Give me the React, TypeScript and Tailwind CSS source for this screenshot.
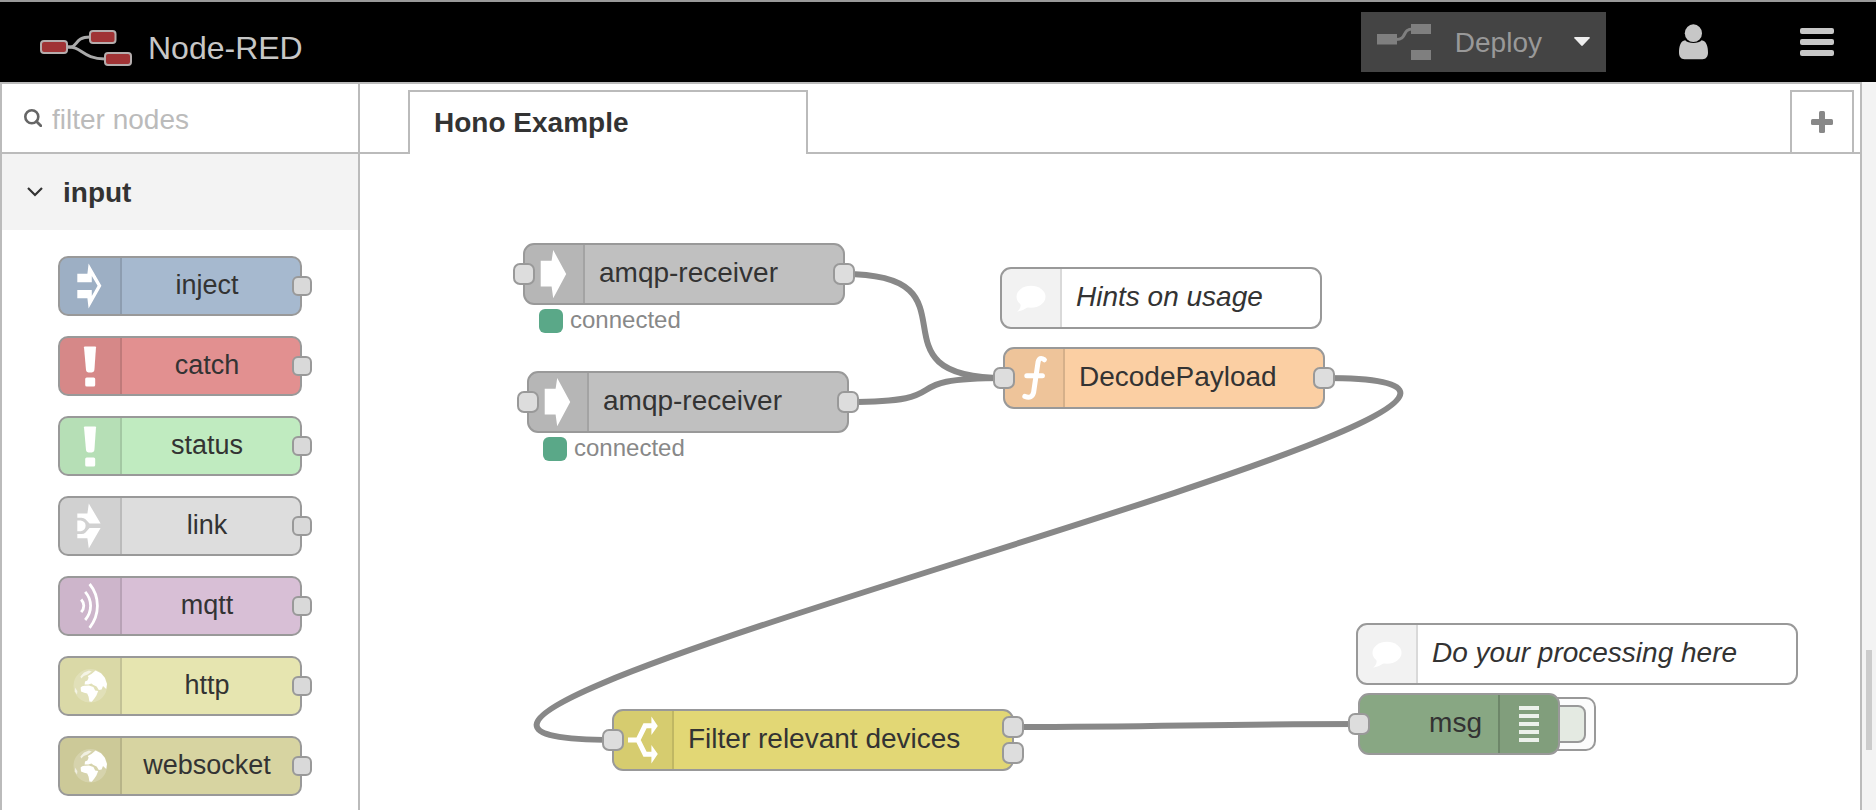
import type { ReactNode } from "react";

const NODE_WIDTH = 200;

function wirePath(x1: number, y1: number, x2: number, y2: number) {
  const dx = x2 - x1;
  const delta = Math.hypot(dx, y2 - y1);
  let scale = 0.75;
  if (delta < NODE_WIDTH) {
    scale = 0.75 - 0.75 * ((NODE_WIDTH - delta) / NODE_WIDTH);
  }
  if (dx < 0) {
    scale += 2 * (Math.min(5 * NODE_WIDTH, Math.abs(dx)) / (5 * NODE_WIDTH));
  }
  const reach = scale * NODE_WIDTH;
  return `M${x1} ${y1} C${x1 + reach} ${y1} ${x2 - reach} ${y2} ${x2} ${y2}`;
}

function Glyph({ children }: { children: ReactNode }) {
  return (
    <svg viewBox="0 0 60 56" width="60" height="56" className="shrink-0" fill="white" aria-hidden="true">
      {children}
    </svg>
  );
}

const InjectIcon = () => (
  <Glyph>
    <path
      fillRule="evenodd"
      d="M17.3 15.8H27.4L28.6 5.5L41.4 27.8L28.6 50.5L27.4 40.3H17.3V32H31.8V38L37.6 27.8L31.8 18V24.2H17.3Z"
    />
  </Glyph>
);

const AlertIcon = () => (
  <Glyph>
    <path d="M24 9.2Q24 8.4 24.8 8.4H35.2Q36 8.4 36 9.2L34.4 32Q34 34.6 30 34.6Q26.400 34.600 26 32Z" />
    <rect x="25.200" y="39.400" width="10" height="9.200" rx="1.500" />
  </Glyph>
);

const LinkIcon = () => (
  <Glyph>
    <path d="M17.3 15.5H27.400L28.800 5.500L40.600 25.600H29.500L25.500 21.200Q24 19.700 21.500 19.700H17.300Z" />
    <path d="M17.300 40.300H27.400L28.800 50.500L40.600 30H29.500L25.500 34.500Q24 36 21.500 36H17.300Z" />
    <path d="M17.300 22.500H20.800Q25.600 23.400 25.600 27.800Q25.600 32.200 20.800 33.200H17.300Z" />
  </Glyph>
);

const WavesIcon = () => (
  <Glyph>
    <g fill="none" stroke="white" strokeWidth="2.800">
      <path d="M29.600 6Q37.400 15.500 37.400 27.800Q37.400 40 29.600 49.800" />
      <path d="M25.200 13.800Q30.600 20 30.600 27.800Q30.600 35.600 25.200 42" />
      <path d="M21.200 21.500Q23.800 24.400 23.800 27.800Q23.800 31.200 21.200 34.200" />
    </g>
  </Glyph>
);

const GlobeIcon = () => (
  <Glyph>
    <circle cx="30.300" cy="27.800" r="16.800" fillOpacity="0.2" />
    <path d="M20.600 29.400Q22 27.600 25 27.800L29 27.400L33.400 29L35.200 32.400L38.200 33L36.400 37.400L34.400 40.400L31.800 43.800L29.400 43.400L28.600 38.800L27.200 35.600L24.200 34.800L21 33.600Z" />
    <path d="M24.600 26.400L25 23.600L27.400 22.600L28.600 19.800L27.800 18L31.400 16L35.600 12.600L41 15.200L44.800 19.800L47 26L46.200 31L43 28L41.600 31.400L38.800 32L36.600 28.600L33.400 27L31.400 25.400L28.400 26.400Z" />
    <path d="M20.400 18.600L24 14.400L29 12.400L31.800 13.400L27.600 16.400L23.800 18L21.200 20.600Z" fillOpacity="0.650" />
    <path d="M15 29.500L17.400 33L17 36.400L14.800 33.400Z" fillOpacity="0.600" />
  </Glyph>
);

const ArrowIcon = () => (
  <Glyph>
    <path d="M15.700 14.800H26.600L28.200 4L41.200 28L28.200 52.200L26.600 40.600H15.700Z" />
  </Glyph>
);

const CommentIcon = () => (
  <Glyph>
    <ellipse cx="29" cy="26.800" rx="14.500" ry="11" />
    <path d="M18.500 34Q19.500 37.500 15.200 41.800Q21.500 40.500 27 36.500Z" />
  </Glyph>
);

const FunctionIcon = () => (
  <Glyph>
    <g fill="none" stroke="white" strokeWidth="5" strokeLinecap="round">
      <path d="M39.400 9.800Q34.400 6 33 12.400L28.600 42.400Q27 49 19.800 46.400" />
      <path d="M21.800 25.800H37.400" />
    </g>
  </Glyph>
);

const SwitchIcon = () => (
  <Glyph>
    <path d="M14 28H25M24 28L31 13.800H38M24 28L31 42.200H38" fill="none" stroke="white" strokeWidth="5" />
    <path d="M37.400 4.400L43.800 14L37.400 23ZM37.400 33L43.800 42L37.400 51.600Z" />
  </Glyph>
);

const DebugIcon = () => (
  <Glyph>
    {[10, 18, 26, 34, 42].map((y) => (
      <rect key={y} x="19" y={y} width="20" height="4" fillOpacity="0.850" />
    ))}
  </Glyph>
);

const PALETTE = [
  { label: "inject", color: "bg-[#a6b9cf]", Icon: InjectIcon },
  { label: "catch", color: "bg-[#e29090]", Icon: AlertIcon },
  { label: "status", color: "bg-[#c0ebc0]", Icon: AlertIcon },
  { label: "link", color: "bg-[#dddddd]", Icon: LinkIcon },
  { label: "mqtt", color: "bg-[#d8bfd6]", Icon: WavesIcon },
  { label: "http", color: "bg-[#e6e5b0]", Icon: GlobeIcon },
  { label: "websocket", color: "bg-[#d7d4a1]", Icon: GlobeIcon },
];

type FlowNodeData = {
  id: string;
  label: string;
  x: number;
  y: number;
  width: number;
  color: string;
  Icon: () => ReactNode;
  inputs?: boolean;
  outputs?: number;
  comment?: boolean;
  debug?: boolean;
  status?: string;
};

/* Positions are relative to the workspace canvas. */
const NODES: FlowNodeData[] = [
  { id: "amqp1", label: "amqp-receiver", x: 163, y: 89, width: 322, color: "bg-[#c0c0c0]", Icon: ArrowIcon, inputs: true, outputs: 1, status: "connected" },
  { id: "amqp2", label: "amqp-receiver", x: 167, y: 217, width: 322, color: "bg-[#c0c0c0]", Icon: ArrowIcon, inputs: true, outputs: 1, status: "connected" },
  { id: "hints", label: "Hints on usage", x: 640, y: 113, width: 322, color: "bg-white", Icon: CommentIcon, comment: true },
  { id: "decode", label: "DecodePayload", x: 643, y: 193, width: 322, color: "bg-[#fbcfa3]", Icon: FunctionIcon, inputs: true, outputs: 1 },
  { id: "filter", label: "Filter relevant devices", x: 252, y: 555, width: 402, color: "bg-[#e2d775]", Icon: SwitchIcon, inputs: true, outputs: 2 },
  { id: "process", label: "Do your processing here", x: 996, y: 469, width: 442, color: "bg-white", Icon: CommentIcon, comment: true },
  { id: "debug", label: "msg", x: 998, y: 539, width: 202, color: "bg-[#88a783]", Icon: DebugIcon, inputs: true, debug: true },
];

const WIRES = [
  wirePath(484, 120, 644, 224),
  wirePath(488, 248, 644, 224),
  wirePath(964, 224, 253, 586),
  wirePath(653, 573, 999, 570),
];

function FlowNode({ node }: { node: FlowNodeData }) {
  const { label, x, y, width, color, Icon, inputs, outputs = 0, comment, debug, status } = node;
  return (
    <div className="absolute" style={{ left: x, top: y, width }}>
      {debug && (
        <button
          type="button"
          aria-label="Toggle debug output"
          className="absolute top-1 -right-9 h-[54px] w-16 rounded-[10px] border-2 border-[#999] bg-[#fcfcfc] py-1.5 pr-2"
        >
          <span className="block h-full rounded-lg border-2 border-[#999] bg-[#e4eae2]" />
        </button>
      )}
      <div
        className={`relative flex h-[62px] items-stretch overflow-hidden rounded-[11px] border-2 border-[#999] ${debug ? "flex-row-reverse" : ""} ${color}`}
      >
        <span
          className={`flex w-[60px] shrink-0 items-center bg-black/5 ${debug ? "border-l-2 border-black/15" : "border-r-2 border-black/10"}`}
        >
          <Icon />
        </span>
        <span
          className={`flex-1 self-center pb-0.5 text-[28px] leading-8 whitespace-nowrap ${comment ? "italic" : ""} ${debug ? "pr-4 text-right" : "pl-3.5"}`}
        >
          {label}
        </span>
      </div>
      {inputs && (
        <span className="absolute top-5 -left-2.5 size-[22px] rounded-[7px] border-2 border-[#999] bg-[#ddd]" />
      )}
      {outputs > 0 && (
        <span className="absolute inset-y-0 -right-2.5 flex flex-col justify-center gap-1">
          {Array.from({ length: outputs }, (_, i) => (
            <span key={i} className="size-[22px] rounded-[7px] border-2 border-[#999] bg-[#ddd]" />
          ))}
        </span>
      )}
      {status && (
        <div className="absolute top-full left-4 flex items-center gap-[7px] pt-1">
          <span className="size-6 rounded-md bg-[#5aa888]" />
          <span className="-mt-0.5 text-2xl leading-6 text-[#888]">{status}</span>
        </div>
      )}
    </div>
  );
}

function Header() {
  return (
    <header className="flex h-[82px] shrink-0 items-center border-t-2 border-[#999] bg-black pr-[42px] pl-10 text-[#c7c7c7]">
      <div className="flex items-center gap-4 pt-3">
        <svg viewBox="0 0 92 36" width="92" height="36" aria-hidden="true">
          <g fill="none" stroke="#aaa" strokeWidth="3">
            <path d="M27 17H31C38 16 35 7 50 7" />
            <path d="M27 17C42 16 42 29 65 29" />
          </g>
          <g fill="#a03335" stroke="#b5adad" strokeWidth="2">
            <rect x="1" y="11" width="26" height="12" rx="3" />
            <rect x="50" y="1" width="25.500" height="12" rx="3" />
            <rect x="65" y="23" width="26" height="12" rx="3" />
          </g>
        </svg>
        <span className="text-[32px] leading-9">Node-RED</span>
      </div>
      <div className="ml-auto flex items-center">
        <div className="flex h-[60px] bg-[#444]">
          <button type="button" className="flex items-center gap-6 pl-4 text-[28px] leading-8 text-[#999]">
            <svg viewBox="0 0 54 36" width="54" height="36" fill="#7f7f7f" aria-hidden="true">
              <path d="M19 15.500C31 15.500 24 5 36 5" fill="none" stroke="#7f7f7f" strokeWidth="3" />
              <rect y="10" width="20" height="10.500" />
              <rect x="34" width="20" height="10" />
              <rect x="34" y="26" width="20" height="10" />
            </svg>
            <span className="pt-0.5">Deploy</span>
          </button>
          <button type="button" aria-label="Deploy options" className="flex items-center pr-4 pl-8">
            <svg viewBox="0 0 16 10" width="16" height="10" fill="#eee" aria-hidden="true">
              <path d="M1 0H15Q16.400 .2 15.600 1.200L8.800 8.600Q8 9.400 7.200 8.600L.4 1.200Q-.4 .2 1 0Z" />
            </svg>
          </button>
        </div>
        <button type="button" aria-label="User" className="ml-[73px]">
          <svg viewBox="0 0 29 36" width="29" height="36" fill="#c7c7c7" aria-hidden="true">
            <ellipse cx="14.400" cy="9.200" rx="8.600" ry="8.900" />
            <path d="M6.200 16.200C9 19.900 19.800 19.900 22.600 16.200C27.500 16.600 29 23 29 28.500C29 32.500 27 35.200 23.500 35.200H5.500C2 35.200 0 32.500 0 28.500C0 23 1.400 16.600 6.200 16.200Z" />
          </svg>
        </button>
        <button type="button" aria-label="Menu" className="ml-[92px] flex w-[34px] flex-col gap-[5px]">
          <span className="h-1.5 rounded-xs bg-[#c7c7c7]" />
          <span className="h-1.5 rounded-xs bg-[#c7c7c7]" />
          <span className="h-1.5 rounded-xs bg-[#c7c7c7]" />
        </button>
      </div>
    </header>
  );
}

function Palette() {
  return (
    <aside className="flex w-[360px] shrink-0 flex-col overflow-hidden border-x-2 border-[#bbb]">
      <label className="flex h-[70px] shrink-0 items-center gap-2.5 border-b-2 border-[#bbb] pr-4 pl-[22px]">
        <svg viewBox="0 0 18 18" width="18" height="18" className="shrink-0" fill="none" stroke="#666" aria-hidden="true">
          <circle cx="7.800" cy="7.800" r="6.500" strokeWidth="2.600" />
          <path d="M12.500 12.500L16.800 16.800" strokeWidth="2.800" strokeLinecap="round" />
        </svg>
        <input
          type="text"
          aria-label="filter nodes"
          placeholder="filter nodes"
          className="w-full min-w-0 bg-transparent pt-1 text-[28px] leading-8 outline-none placeholder:text-[#bbb]"
        />
      </label>
      <button
        type="button"
        aria-expanded="true"
        className="flex h-[76px] shrink-0 items-center gap-5 bg-[#f3f3f3] pl-[25px] text-[28px] leading-8 font-bold"
      >
        <svg viewBox="0 0 16 10" width="16" height="10" fill="none" stroke="#333" strokeWidth="2.200" aria-hidden="true">
          <path d="M1 1L8 8L15 1" />
        </svg>
        <span className="pt-0.5">input</span>
      </button>
      <ul className="flex flex-col gap-5 pt-[26px] pl-14">
        {PALETTE.map(({ label, color, Icon }) => (
          <li key={label} className="relative w-[244px]">
            <div className={`flex h-[60px] items-stretch overflow-hidden rounded-[10px] border-2 border-[#999] ${color}`}>
              <span className="flex shrink-0 items-center border-r-2 border-black/10 bg-black/5">
                <Icon />
              </span>
              <span className="flex-1 self-center pr-2 pb-0.5 text-center text-[27px] leading-8">{label}</span>
            </div>
            <span className="absolute top-5 -right-2.5 size-5 rounded-md border-2 border-[#999] bg-[#d9d9d9]" />
          </li>
        ))}
      </ul>
    </aside>
  );
}

function Workspace() {
  return (
    <main className="flex min-w-0 flex-1 flex-col border-r-2 border-[#bbb]">
      <div className="flex h-[70px] shrink-0 items-stretch">
        <div className="w-12 border-b-2 border-[#bbb]" />
        <button
          type="button"
          className="mt-1.5 w-[400px] border-x-2 border-t-2 border-[#bbb] pl-6 text-left text-[28px] leading-8 font-bold"
        >
          Hono Example
        </button>
        <div className="flex-1 border-b-2 border-[#bbb]" />
        <button
          type="button"
          aria-label="Add flow"
          className="mt-1.5 flex w-16 items-center justify-center border-2 border-[#bbb]"
        >
          <svg viewBox="0 0 22 22" width="22" height="22" fill="#888" aria-hidden="true">
            <rect y="8" width="22" height="6" rx="1.500" />
            <rect x="8" width="6" height="22" rx="1.500" />
          </svg>
        </button>
        <div className="w-1.5 border-b-2 border-[#bbb]" />
      </div>
      <div className="relative min-h-0 flex-1 overflow-hidden">
        <svg className="absolute inset-0 size-full" fill="none" stroke="#888" strokeWidth="6" aria-hidden="true">
          {WIRES.map((d) => (
            <path key={d} d={d} />
          ))}
        </svg>
        {NODES.map((node) => (
          <FlowNode key={node.id} node={node} />
        ))}
      </div>
    </main>
  );
}

export default function App() {
  return (
    <div className="flex h-screen flex-col overflow-hidden bg-white font-['Liberation_Sans',Arial,sans-serif] text-[#333]">
      <Header />
      <div className="flex min-h-0 flex-1">
        <div className="flex min-w-0 flex-1 border-t-2 border-[#bbb]">
          <Palette />
          <Workspace />
        </div>
        <div className="flex w-3.5 shrink-0 flex-col bg-[#f3f3f3] pl-1">
          <div className="mt-auto mb-[60px] h-[100px] w-1.5 bg-[#ccc]" />
        </div>
      </div>
    </div>
  );
}
